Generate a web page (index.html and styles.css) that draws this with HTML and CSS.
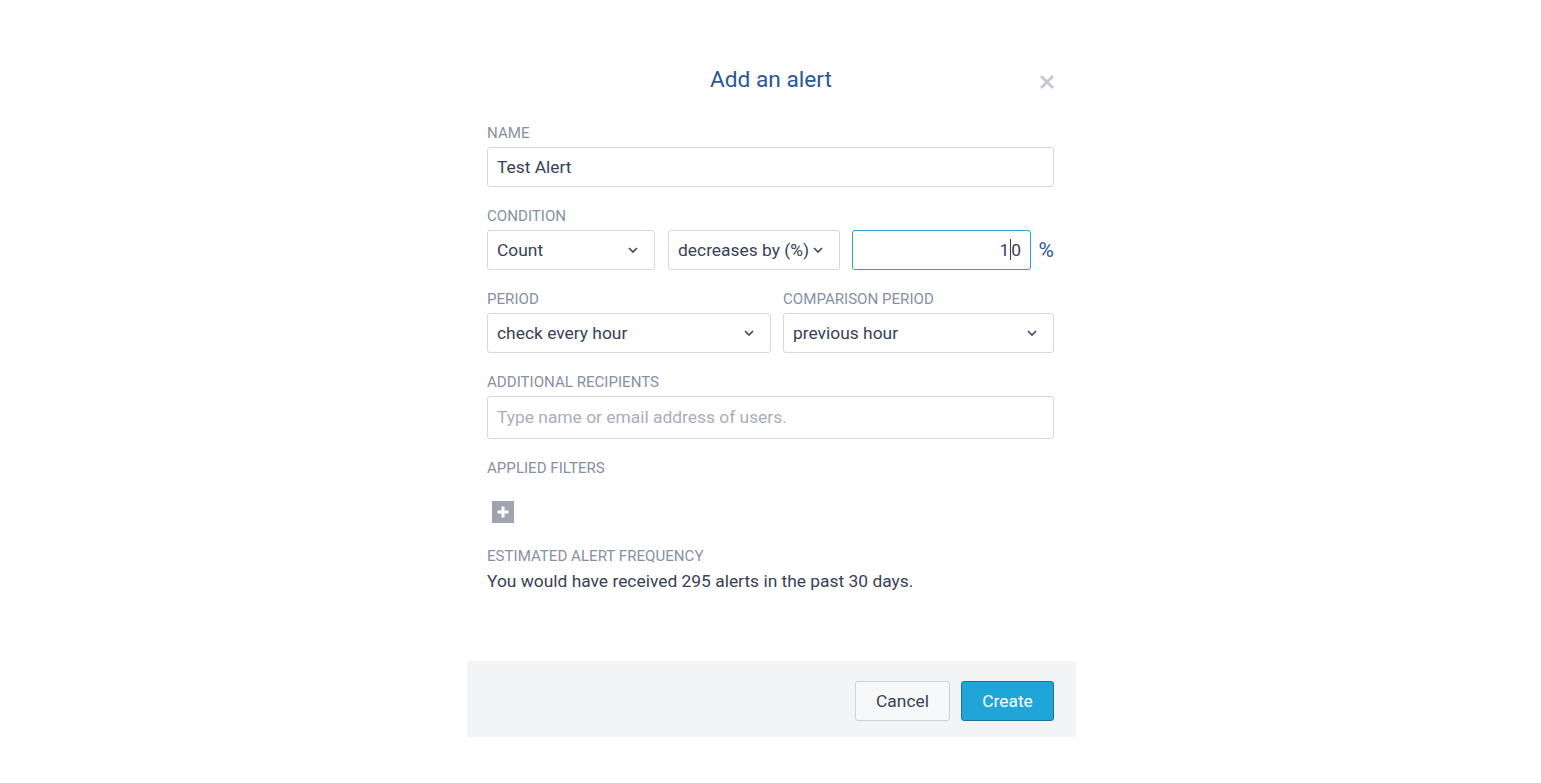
FILE: index.html
```html
<!DOCTYPE html>
<html lang="en">
<head>
<meta charset="utf-8">
<title>Add an alert</title>
<link rel="stylesheet" href="styles.css">
</head>
<body>
<div class="modal">
  <div class="modal-header">
    <h1 class="modal-title">Add an alert</h1>
    <button class="close" aria-label="Close">
      <svg width="16" height="16" viewBox="0 0 16 16"><path d="M2 2 L14 14 M14 2 L2 14" stroke="#c7cbd1" stroke-width="3" stroke-linecap="butt"/></svg>
    </button>
  </div>
  <div class="modal-body">
    <div class="field">
      <div class="label">Name</div>
      <div class="input">Test Alert</div>
    </div>
    <div class="field">
      <div class="label">Condition</div>
      <div class="row condition-row">
        <div class="select w-count"><span>Count</span><svg class="chev" width="10" height="6" viewBox="0 0 10 6"><path d="M1 1 L5 5 L9 1" fill="none" stroke="#3b4357" stroke-width="1.6"/></svg></div>
        <div class="select w-op"><span>decreases by (%)</span><svg class="chev" width="10" height="6" viewBox="0 0 10 6"><path d="M1 1 L5 5 L9 1" fill="none" stroke="#3b4357" stroke-width="1.6"/></svg></div>
        <div class="input number focus">1<span class="caret"></span>0</div>
        <span class="unit">%</span>
      </div>
    </div>
    <div class="field">
      <div class="row period-row">
        <div class="col col-period">
          <div class="label">Period</div>
          <div class="select"><span>check every hour</span><svg class="chev" width="10" height="6" viewBox="0 0 10 6"><path d="M1 1 L5 5 L9 1" fill="none" stroke="#3b4357" stroke-width="1.6"/></svg></div>
        </div>
        <div class="col col-compare">
          <div class="label">Comparison Period</div>
          <div class="select"><span>previous hour</span><svg class="chev" width="10" height="6" viewBox="0 0 10 6"><path d="M1 1 L5 5 L9 1" fill="none" stroke="#3b4357" stroke-width="1.6"/></svg></div>
        </div>
      </div>
    </div>
    <div class="field">
      <div class="label">Additional Recipients</div>
      <div class="input tall placeholder">Type name or email address of users.</div>
    </div>
    <div class="field">
      <div class="label">Applied Filters</div>
      <button class="add-filter" aria-label="Add filter">
        <svg width="22" height="22" viewBox="0 0 22 22"><path d="M11 5.5 V16.5 M5.5 11 H16.5" stroke="#ffffff" stroke-width="3"/></svg>
      </button>
    </div>
    <div class="field last">
      <div class="label">Estimated Alert Frequency</div>
      <div class="estimate">You would have received 295 alerts in the past 30 days.</div>
    </div>
  </div>
  <div class="modal-footer">
    <button class="btn btn-cancel">Cancel</button>
    <button class="btn btn-create">Create</button>
  </div>
</div>
</body>
</html>
```
FILE: styles.css
```css
* { box-sizing: border-box; }
html, body { margin: 0; padding: 0; background: #ffffff; }
body {
  font-family: Roboto, "Liberation Sans", Arial, sans-serif;
  color: #384156;
}
.modal {
  width: 609px;
  margin: 40px auto 0;
  padding-top: 20px;
  background: #fff;
  position: relative;
  left: 1px;
}
.modal-header {
  height: 40px;
  margin: 0 21px 24px 20px;
  display: flex;
  align-items: center;
  justify-content: center;
  position: relative;
}
.modal-title {
  margin: 0;
  font-size: 22.7px;
  font-weight: 400;
  line-height: 40px;
  color: #2b5797;
}
.close {
  position: absolute;
  right: 0;
  top: 14px;
  width: 16px;
  height: 16px;
  padding: 0;
  border: 0;
  background: none;
  display: block;
}
.close svg { display: block; }
.modal-body {
  padding: 0 22px 0 20px;
}
.field { margin-bottom: 20px; }
.field.last { margin-bottom: 69px; }
.label {
  font-size: 15.1px;
  line-height: 18px;
  text-transform: uppercase;
  color: #8790a3;
  margin-bottom: 5px;
  white-space: nowrap;
}
.input, .select {
  height: 40px;
  border: 1px solid #d5d8de;
  border-radius: 3px;
  background: #fff;
  font-size: 17.4px;
  line-height: 38px;
  padding: 0 9px;
  color: #384156;
  white-space: nowrap;
}
.input.tall { height: 43px; line-height: 41px; }
.placeholder { color: #a8aeba; }
.select {
  display: flex;
  align-items: center;
  justify-content: space-between;
  padding-right: 16px;
}
.chev { display: block; flex: none; }
.row { display: flex; align-items: center; }
.w-count { width: 168px; flex: none; margin-right: 13px; }
.w-op { width: 172px; flex: none; margin-right: 12px; padding-right: 16px; }
.number {
  width: 179px;
  flex: none;
  text-align: right;
  border-color: #2aa3d6;
}
.caret {
  display: inline-block;
  width: 1px;
  height: 21px;
  background: #384156;
  vertical-align: -4px;
  margin: 0 0 0 1px;
}
.unit {
  flex: none;
  font-size: 21px;
  color: #2b5797;
  margin-left: auto;
}
.period-row { gap: 12px; align-items: flex-start; }
.col-period { width: 284px; flex: none; }
.col-compare { flex: 1; min-width: 0; }
.add-filter {
  margin: 24px 0 24px 5px;
  width: 22px;
  height: 22px;
  padding: 0;
  border: 0;
  background: #9ea4ad;
  display: block;
}
.add-filter svg { display: block; }
.estimate {
  font-size: 17.4px;
  line-height: 22px;
  color: #384156;
}
.modal-footer {
  background: #f3f4f6;
  height: 76px;
  padding: 20px 22px 0 20px;
  display: flex;
  justify-content: flex-end;
  gap: 11px;
}
.btn {
  height: 40px;
  border-radius: 3px;
  font-family: inherit;
  font-size: 17.4px;
  padding: 0;
}
.btn-cancel {
  width: 95px;
  background: #f7f8fa;
  border: 1px solid #c9d1db;
  color: #384156;
}
.btn-create {
  width: 93px;
  background: #1fa5d8;
  border: 1px solid #18749a;
  color: #fff;
}
```
